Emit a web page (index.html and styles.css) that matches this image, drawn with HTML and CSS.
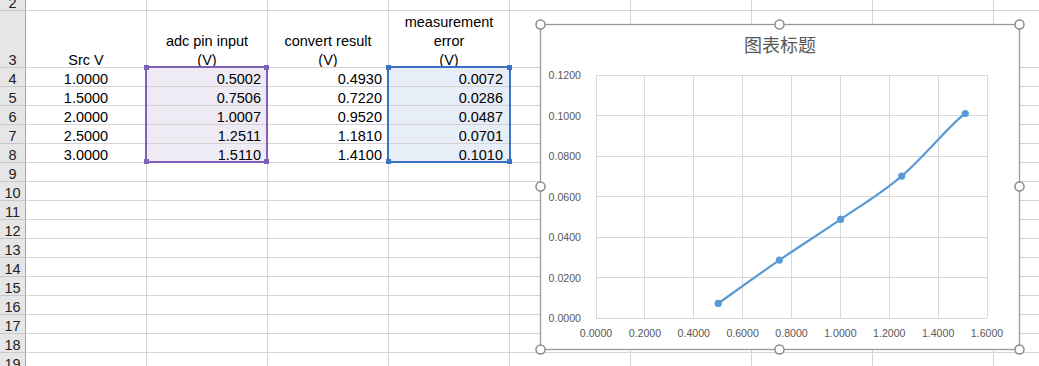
FILE: index.html
```html
<!DOCTYPE html>
<html lang="en">
<head>
    <meta charset="UTF-8">
    <title>adc measurement</title>
    <link rel="stylesheet" href="styles.css">
</head>
<body>
    <div class="sheet">
        <div class="grid">
            <div class="rh">2</div><div></div><div></div><div></div><div></div><div></div><div></div><div></div><div></div><div></div>

            <div class="rh">3</div>
            <div class="hd"><span>Src V</span></div>
            <div class="hd"><span>adc pin input<br>(V)</span></div>
            <div class="hd"><span>convert result<br>(V)</span></div>
            <div class="hd"><span>measurement<br>error<br>(V)</span></div>
            <div></div><div></div><div></div><div></div><div></div>

            <div class="rh">4</div><div class="ctr">1.0000</div><div class="num pu">0.5002</div><div class="num">0.4930</div><div class="num bl">0.0072</div><div></div><div></div><div></div><div></div><div></div>
            <div class="rh">5</div><div class="ctr">1.5000</div><div class="num pu">0.7506</div><div class="num">0.7220</div><div class="num bl">0.0286</div><div></div><div></div><div></div><div></div><div></div>
            <div class="rh">6</div><div class="ctr">2.0000</div><div class="num pu">1.0007</div><div class="num">0.9520</div><div class="num bl">0.0487</div><div></div><div></div><div></div><div></div><div></div>
            <div class="rh">7</div><div class="ctr">2.5000</div><div class="num pu">1.2511</div><div class="num">1.1810</div><div class="num bl">0.0701</div><div></div><div></div><div></div><div></div><div></div>
            <div class="rh">8</div><div class="ctr">3.0000</div><div class="num pu">1.5110</div><div class="num">1.4100</div><div class="num bl">0.1010</div><div></div><div></div><div></div><div></div><div></div>

            <div class="rh">9</div><div></div><div></div><div></div><div></div><div></div><div></div><div></div><div></div><div></div>
            <div class="rh">10</div><div></div><div></div><div></div><div></div><div></div><div></div><div></div><div></div><div></div>
            <div class="rh">11</div><div></div><div></div><div></div><div></div><div></div><div></div><div></div><div></div><div></div>
            <div class="rh">12</div><div></div><div></div><div></div><div></div><div></div><div></div><div></div><div></div><div></div>
            <div class="rh">13</div><div></div><div></div><div></div><div></div><div></div><div></div><div></div><div></div><div></div>
            <div class="rh">14</div><div></div><div></div><div></div><div></div><div></div><div></div><div></div><div></div><div></div>
            <div class="rh">15</div><div></div><div></div><div></div><div></div><div></div><div></div><div></div><div></div><div></div>
            <div class="rh">16</div><div></div><div></div><div></div><div></div><div></div><div></div><div></div><div></div><div></div>
            <div class="rh">17</div><div></div><div></div><div></div><div></div><div></div><div></div><div></div><div></div><div></div>
            <div class="rh">18</div><div></div><div></div><div></div><div></div><div></div><div></div><div></div><div></div><div></div>
            <div class="rh">19</div><div></div><div></div><div></div><div></div><div></div><div></div><div></div><div></div><div></div>
        </div>

        <!-- range selections -->
        <div class="sel purple"><i class="tl"></i><i class="tr"></i><i class="bl-h"></i><i class="br"></i></div>
        <div class="sel blue"><i class="tl"></i><i class="tr"></i><i class="bl-h"></i><i class="br"></i></div>

        <!-- chart object -->
        <div class="chart">
            <svg width="480" height="326" viewBox="0 0 480 326">
                <rect x="0.5" y="0.5" width="479" height="325" fill="#fff" stroke="#999" stroke-width="1.3"/>
                <text class="title" x="240" y="28" text-anchor="middle">图表标题</text>

                <g stroke="#d9d9d9" stroke-width="1" shape-rendering="crispEdges">
                    <line x1="56" y1="51" x2="447" y2="51"/>
                    <line x1="56" y1="91.5" x2="447" y2="91.5"/>
                    <line x1="56" y1="132" x2="447" y2="132"/>
                    <line x1="56" y1="172.5" x2="447" y2="172.5"/>
                    <line x1="56" y1="213" x2="447" y2="213"/>
                    <line x1="56" y1="253.5" x2="447" y2="253.5"/>
                    <line x1="56" y1="294" x2="447" y2="294"/>
                    <line x1="56" y1="51" x2="56" y2="294"/>
                    <line x1="104.9" y1="51" x2="104.9" y2="294"/>
                    <line x1="153.8" y1="51" x2="153.8" y2="294"/>
                    <line x1="202.6" y1="51" x2="202.6" y2="294"/>
                    <line x1="251.5" y1="51" x2="251.5" y2="294"/>
                    <line x1="300.4" y1="51" x2="300.4" y2="294"/>
                    <line x1="349.3" y1="51" x2="349.3" y2="294"/>
                    <line x1="398.1" y1="51" x2="398.1" y2="294"/>
                    <line x1="447" y1="51" x2="447" y2="294"/>
                </g>

                <g class="axis" text-anchor="end">
                    <text x="41" y="55">0.1200</text>
                    <text x="41" y="95.5">0.1000</text>
                    <text x="41" y="136">0.0800</text>
                    <text x="41" y="176.5">0.0600</text>
                    <text x="41" y="217">0.0400</text>
                    <text x="41" y="257.5">0.0200</text>
                    <text x="41" y="298">0.0000</text>
                </g>
                <g class="axis" text-anchor="middle">
                    <text x="56" y="313">0.0000</text>
                    <text x="104.9" y="313">0.2000</text>
                    <text x="153.8" y="313">0.4000</text>
                    <text x="202.6" y="313">0.6000</text>
                    <text x="251.5" y="313">0.8000</text>
                    <text x="300.4" y="313">1.0000</text>
                    <text x="349.3" y="313">1.2000</text>
                    <text x="398.1" y="313">1.4000</text>
                    <text x="447" y="313">1.6000</text>
                </g>

                <path d="M178.2 279.4 C188.4 272.2 219.0 250.1 239.4 236.1 C259.8 222.1 280.2 209.4 300.6 195.4 C320.9 181.4 341.0 169.7 361.7 152.1 C382.5 134.4 414.7 95.7 425.3 89.5"
                      fill="none" stroke="#5b9bd5" stroke-width="2.2" stroke-linecap="round"/>
                <g fill="#5b9bd5">
                    <circle cx="178.2" cy="279.4" r="3.6"/>
                    <circle cx="239.4" cy="236.1" r="3.6"/>
                    <circle cx="300.6" cy="195.4" r="3.6"/>
                    <circle cx="361.7" cy="152.1" r="3.6"/>
                    <circle cx="425.3" cy="89.5" r="3.6"/>
                </g>

                <g fill="#fff" stroke="#8c8c8c" stroke-width="1.5">
                    <circle cx="0.5" cy="0.5" r="4.5"/>
                    <circle cx="239.5" cy="0.5" r="4.5"/>
                    <circle cx="479.5" cy="0.5" r="4.5"/>
                    <circle cx="0.5" cy="162.5" r="4.5"/>
                    <circle cx="479.5" cy="162.5" r="4.5"/>
                    <circle cx="0.5" cy="325.5" r="4.5"/>
                    <circle cx="239.5" cy="325.5" r="4.5"/>
                    <circle cx="479.5" cy="325.5" r="4.5"/>
                </g>
            </svg>
        </div>
    </div>
</body>
</html>
```

FILE: styles.css
```css
* {
    margin: 0;
    padding: 0;
    box-sizing: border-box;
}

body {
    background: #fff;
    color: #000;
    font-family: "Liberation Sans", Arial, sans-serif;
    font-size: 14.5px;
    overflow: hidden;
}

.sheet {
    position: relative;
    width: 1039px;
    height: 366px;
    overflow: hidden;
}

.grid {
    display: grid;
    grid-template-columns: 26px repeat(9, 121px);
    grid-template-rows: 19px 57px repeat(16, 19px);
    margin-top: -8px;
}

.grid > div {
    display: flex;
    align-items: flex-end;
    line-height: 14px;
    white-space: nowrap;
    border-right: 1px solid #d4d4d4;
    border-bottom: 1px solid #d4d4d4;
}

.grid > .rh {
    justify-content: center;
    background: #e6e6e6;
    color: #222;
    border-right-color: #a8a8a8;
    border-bottom-color: #c8c8c8;
}

.grid > .hd {
    justify-content: center;
    text-align: center;
    line-height: 19px;
    overflow: hidden;
}

.hd span {
    margin-bottom: -3px;
}

.ctr {
    justify-content: center;
}

.num {
    justify-content: flex-end;
    padding-right: 6px;
}

.pu {
    background: #eeebf5;
}

.bl {
    background: #e7eef8;
}

.sel {
    position: absolute;
    top: 66px;
    width: 123px;
    height: 97px;
    border: 2px solid;
}

.sel.purple {
    left: 145px;
    color: #7f60b9;
}

.sel.blue {
    left: 387px;
    width: 124px;
    color: #3c72c6;
}

.sel i {
    position: absolute;
    width: 5px;
    height: 5px;
    background: currentColor;
}

.sel .tl { left: -3px; top: -3px; }
.sel .tr { right: -3px; top: -3px; }
.sel .bl-h { left: -3px; bottom: -3px; }
.sel .br { right: -3px; bottom: -3px; }

.chart {
    position: absolute;
    left: 540px;
    top: 24px;
    width: 480px;
    height: 326px;
}

.chart svg {
    display: block;
    overflow: visible;
}

.title {
    font-family: "Noto Sans CJK SC", sans-serif;
    font-size: 18px;
    fill: #595959;
}

.axis text {
    font-family: "Liberation Sans", Arial, sans-serif;
    font-size: 10.6px;
    fill: #595959;
}
```
